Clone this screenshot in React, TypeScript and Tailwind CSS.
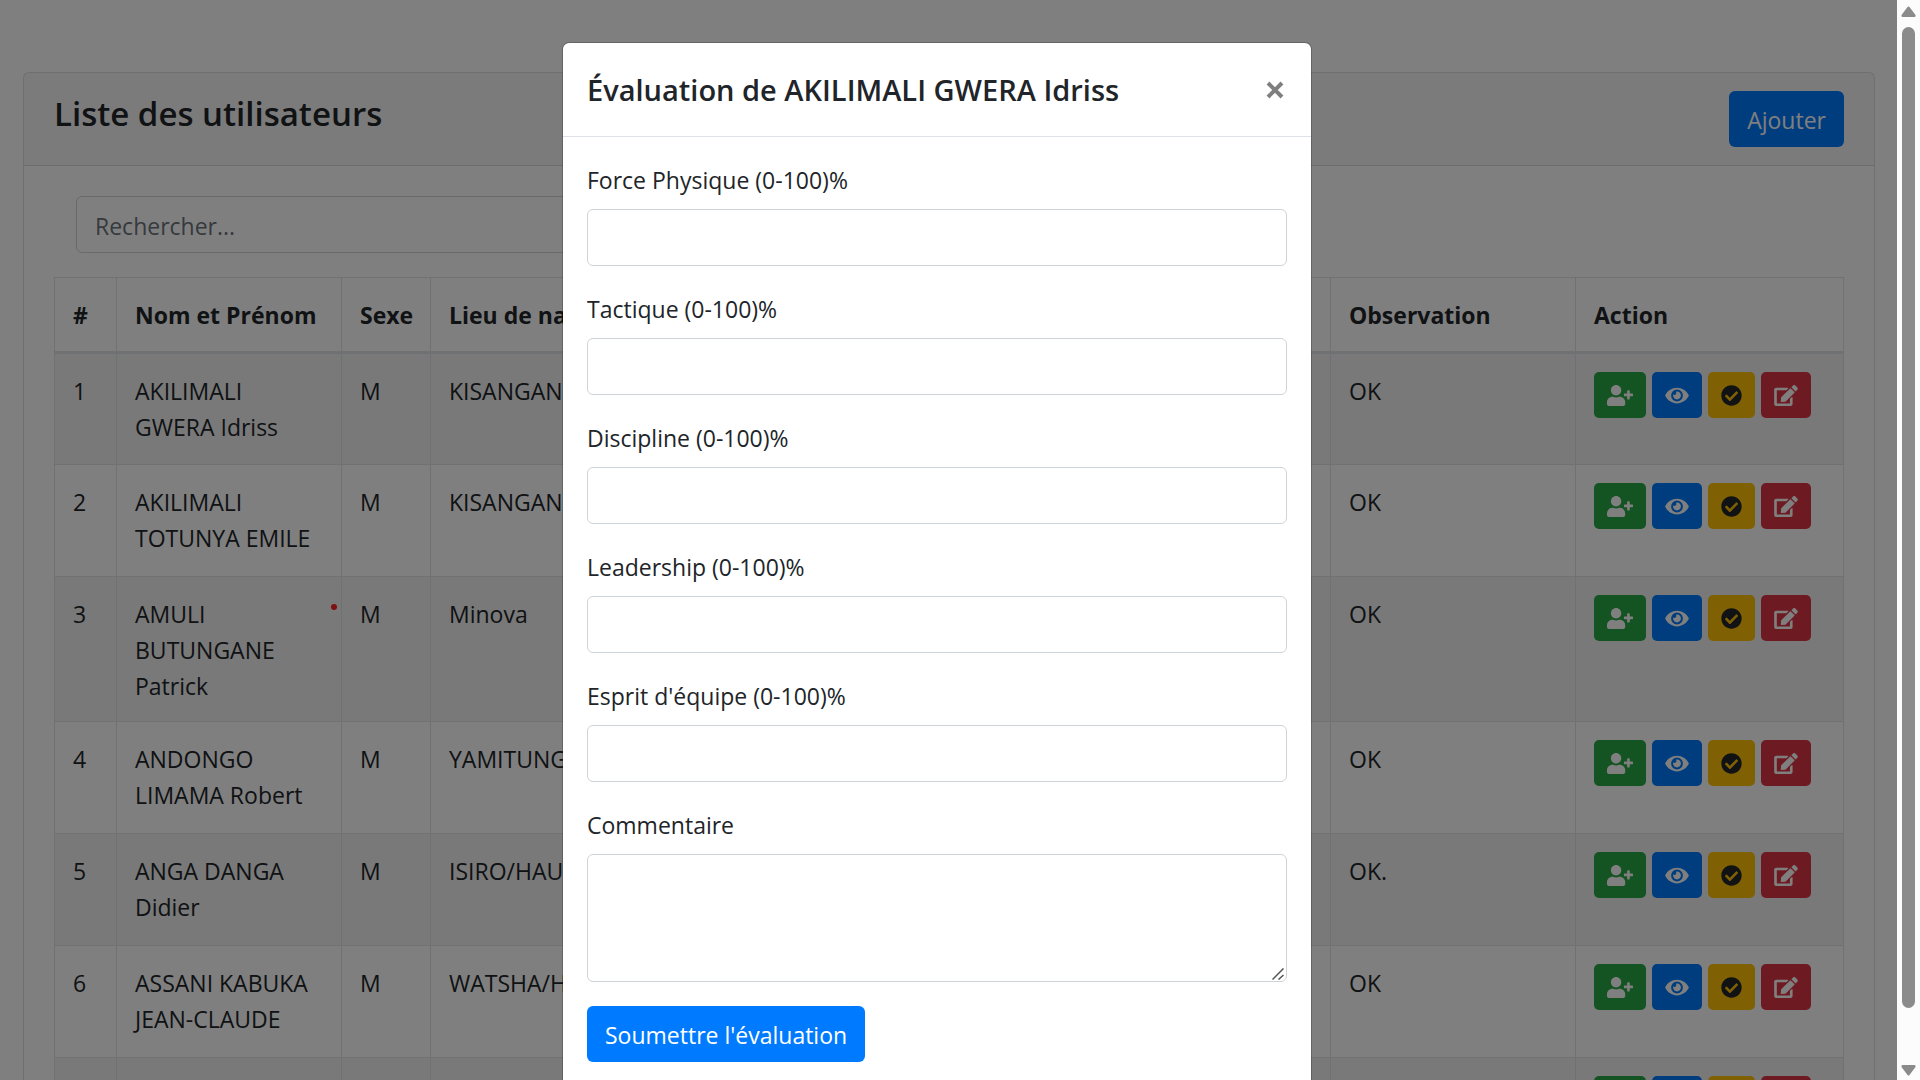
import { FaCheckCircle, FaEdit, FaEye, FaUserPlus } from "react-icons/fa";

type Person = { id: string; name: string; sex: string; birthplace: string; note: string; marked?: boolean };

const people: Person[] = [
  { id: "1", name: "AKILIMALI GWERA Idriss", sex: "M", birthplace: "KISANGANI", note: "OK" },
  { id: "2", name: "AKILIMALI TOTUNYA EMILE", sex: "M", birthplace: "KISANGANI", note: "OK" },
  { id: "3", name: "AMULI BUTUNGANE Patrick", sex: "M", birthplace: "Minova", note: "OK", marked: true },
  { id: "4", name: "ANDONGO LIMAMA Robert", sex: "M", birthplace: "YAMITUNGA", note: "OK" },
  { id: "5", name: "ANGA DANGA Didier", sex: "M", birthplace: "ISIRO/HAUT-UELE", note: "OK." },
  { id: "6", name: "ASSANI KABUKA JEAN-CLAUDE", sex: "M", birthplace: "WATSHA/HAUT-UELE", note: "OK" },
  { id: "", name: "", sex: "", birthplace: "", note: "" },
];

const criteria = [
  { id: "force", label: "Force Physique (0-100)%" },
  { id: "tactique", label: "Tactique (0-100)%" },
  { id: "discipline", label: "Discipline (0-100)%" },
  { id: "leadership", label: "Leadership (0-100)%" },
  { id: "equipe", label: "Esprit d'équipe (0-100)%" },
];

const actions = [
  { label: "Ajouter au groupe", Icon: FaUserPlus, style: "bg-[#28a745] text-white", iconWidth: "w-[26px]" },
  { label: "Voir", Icon: FaEye, style: "bg-[#007bff] text-white", iconWidth: "w-6" },
  { label: "Évaluer", Icon: FaCheckCircle, style: "bg-[#ffc107] text-[#212529]", iconWidth: "w-[21px]" },
  { label: "Modifier", Icon: FaEdit, style: "bg-[#dc3545] text-white", iconWidth: "w-6" },
];

const cell = "border border-[#dee2e6] px-[18px] text-left align-top";
const textCell = `${cell} pt-[19px] pb-[17px]`;

function UsersTable() {
  return (
    <table className="w-full table-fixed border-collapse">
      <colgroup>
        <col className="w-[62px]" />
        <col className="w-[225px]" />
        <col className="w-[89px]" />
        <col />
        <col className="w-[245px]" />
        <col className="w-[268px]" />
      </colgroup>
      <thead>
        <tr className="h-[75px] border-b-[3px] border-[#dee2e6]">
          {["#", "Nom et Prénom", "Sexe", "Lieu de naissance", "Observation", "Action"].map((title) => (
            <th key={title} scope="col" className="whitespace-nowrap border-x border-t border-[#dee2e6] px-[18px] pt-px text-left align-middle font-bold">
              {title}
            </th>
          ))}
        </tr>
      </thead>
      <tbody>
        {people.map((p) => (
          <tr key={p.id} className="h-[112px] odd:bg-black/5">
            <td className={textCell}>{p.id}</td>
            <td className={`${textCell} relative`}>
              {p.name}
              {p.marked && <span className="absolute top-[27px] right-1 size-[6px] rounded-full bg-[#ff2020]" />}
            </td>
            <td className={textCell}>{p.sex}</td>
            <td className={`${textCell} whitespace-nowrap`}>{p.birthplace}</td>
            <td className={textCell}>{p.note}</td>
            <td className={`${cell} py-[18px]`}>
              <div className="flex gap-[6px]">
                {actions.map(({ label, Icon, style, iconWidth }) => (
                  <button key={label} type="button" aria-label={label} className={`flex h-[46px] items-center rounded-[5px] px-[13px] ${style}`}>
                    <Icon className={`h-[21px] ${iconWidth}`} />
                  </button>
                ))}
              </div>
            </td>
          </tr>
        ))}
      </tbody>
    </table>
  );
}

function EvaluationDialog() {
  const field = "block w-full rounded-[6px] border border-[#ced4da] bg-white px-[18px]";
  return (
    <div role="dialog" aria-modal="true" aria-labelledby="dialog-title" className="h-fit w-[750px] rounded-[7px] border border-black/20 bg-white bg-clip-padding">
      <header className="flex items-center justify-between border-b border-[#dee2e6] px-6 py-6">
        <h5 id="dialog-title" className="text-[29px] leading-[45px] font-semibold">
          Évaluation de AKILIMALI GWERA Idriss
        </h5>
        <button type="button" aria-label="Fermer" className="px-[3px] text-black/50">
          <svg viewBox="0 0 18 18" className="size-[18px]" fill="none" stroke="currentColor" strokeWidth="4">
            <path d="M2 2 16 16M16 2 2 16" />
          </svg>
        </button>
      </header>
      <form className="p-6">
        {criteria.map(({ id, label }) => (
          <div key={id} className="mb-6">
            <label htmlFor={id} className="mb-[11px] block pt-px">
              {label}
            </label>
            <input id={id} type="text" className={`${field} h-[57px]`} />
          </div>
        ))}
        <div className="mb-6">
          <label htmlFor="commentaire" className="mb-[11px] block pt-px">
            Commentaire
          </label>
          <div className="relative">
            <textarea id="commentaire" className={`${field} h-[128px] resize-none`} />
            <svg viewBox="0 0 12 12" className="pointer-events-none absolute right-[3px] bottom-[2px] size-3" fill="none" stroke="#555" strokeWidth="1.500">
              <path d="M.5 11.500 11.500 .5M6.500 11.500 11.500 7" />
            </svg>
          </div>
        </div>
        <button type="button" className="h-14 rounded-[6px] bg-[#007bff] px-[18px] pt-px text-white">
          Soumettre l'évaluation
        </button>
      </form>
    </div>
  );
}

function PageScrollbar() {
  return (
    <div aria-hidden="true" className="flex w-[23px] shrink-0 flex-col items-center bg-[#fcfcfc] pt-[6px] pb-1 text-[#8b8b8b]">
      <svg viewBox="0 0 15 11" className="h-[11px] w-[15px]" fill="currentColor">
        <path d="M6.500 1Q7.500 0 8.500 1L14.500 9Q15 11 13.500 11H1.500Q0 11 .5 9Z" />
      </svg>
      <div className="mt-[10px] mb-[57px] w-[13px] flex-1 rounded-full bg-current" />
      <svg viewBox="0 0 15 11" className="h-[11px] w-[15px] rotate-180" fill="currentColor">
        <path d="M6.500 1Q7.500 0 8.500 1L14.500 9Q15 11 13.500 11H1.500Q0 11 .5 9Z" />
      </svg>
    </div>
  );
}

export default function App() {
  return (
    <div className="flex h-screen overflow-hidden bg-white font-['Open_Sans',sans-serif] text-[23px] leading-9 text-[#212529]">
      <div className="relative min-w-0 flex-1 overflow-hidden">
        <main className="pt-[72px] pr-[22px] pl-[23px]">
          <section className="rounded-[6px] border border-black/[.125]">
            <header className="flex items-start justify-between border-b border-black/[.125] bg-black/[.03] px-[30px] py-[18px]">
              <h3 className="text-[33px] leading-[46px] font-semibold">Liste des utilisateurs</h3>
              <button type="button" className="h-14 rounded-[6px] bg-[#007bff] px-[18px] pt-px text-white">
                Ajouter
              </button>
            </header>
            <div className="px-[30px] pt-[30px]">
              <input
                type="search"
                aria-label="Rechercher"
                placeholder="Rechercher..."
                className="mb-6 ml-[22px] block h-[57px] w-1/2 rounded-[6px] border border-[#ced4da] px-[18px] pt-[2px] placeholder:text-[#6c757d]"
              />
              <UsersTable />
            </div>
          </section>
        </main>
        <div className="absolute inset-0 flex justify-center bg-black/50 pt-[42px] pr-[23px]">
          <EvaluationDialog />
        </div>
      </div>
      <PageScrollbar />
    </div>
  );
}
